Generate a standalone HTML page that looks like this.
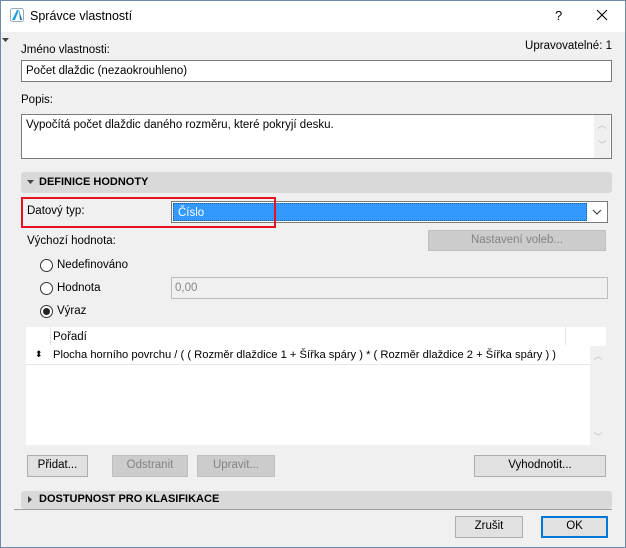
<!DOCTYPE html>
<html><head><meta charset="utf-8"><style>
*{box-sizing:border-box;margin:0;padding:0}
body{width:626px;height:548px;overflow:hidden;font-family:"Liberation Sans",sans-serif;font-size:11.5px;color:#000;background:#f0f0f0}
.win{position:absolute;left:0;top:0;width:626px;height:548px;border:1px solid #6d8aa8;background:#f0f0f0}
.a{position:absolute}
.tb{left:0;top:0;width:624px;height:31px;background:#fff}
.in{background:#fff;border:1px solid #7a7a7a}
.btn{background:#e1e1e1;border:1px solid #adadad;text-align:center;line-height:19px;font-size:11.5px}
.dis{background:#cccccc;border-color:#bfbfbf;color:#838383}
.sec{background:#d9d9d9;border-radius:3px;font-weight:bold;font-size:11px;line-height:20px;padding-left:18px}
.rad{width:13px;height:13px;border:1px solid #333;border-radius:50%;background:#fff}
</style></head><body><div class="win">
<div class="a tb"></div>
<svg class="a" style="left:9px;top:7px" width="14" height="14"><rect x="0.5" y="0.5" width="13" height="13" rx="2" fill="#fff" stroke="#9ab"/><path d="M2 12 L7 2 L9 2 L5 12Z" fill="#1aa0e0"/><path d="M9 2 L12 12 L10 12Z" fill="#0a70b0"/></svg>
<div class="a" style="left:29px;top:8px;font-size:12.5px">Správce vlastností</div>
<div class="a" style="left:554px;top:7px;font-size:13px">?</div>
<svg class="a" style="left:595px;top:8px" width="12" height="12"><path d="M1 1L11 11M11 1L1 11" stroke="#000" stroke-width="1.1"/></svg>
<svg class="a" style="left:1px;top:37px" width="8" height="6"><path d="M0 0H7L3.5 4Z" fill="#444"/></svg>
<div class="a" style="left:20px;top:43px">Jméno vlastnosti:</div>
<div class="a" style="right:13px;top:39px">Upravovatelné: 1</div>
<div class="a in" style="left:20px;top:59px;width:591px;height:22px;padding:4px 4px">Počet dlaždic (nezaokrouhleno)</div>
<div class="a" style="left:20px;top:93px">Popis:</div>
<div class="a in" style="left:20px;top:113px;width:591px;height:45px;padding:4px 4px">Vypočítá počet dlaždic daného rozměru, které pokryjí desku.</div>
<div class="a" style="left:593px;top:114px;width:16px;height:43px;background:#f0f0f0;color:#bbb;font-size:9px;text-align:center;line-height:20px">︿<br>﹀</div>
<div class="a sec" style="left:20px;top:171px;width:591px;height:21px">DEFINICE HODNOTY</div>
<svg class="a" style="left:26px;top:179px" width="8" height="6"><path d="M0 0H7L3.5 4Z" fill="#444"/></svg>
<div class="a" style="left:170px;top:200px;width:437px;height:22px;border:1px solid #7a7a7a;background:#fff"></div>
<div class="a" style="left:172px;top:202px;width:414px;height:18px;background:#3399ff;color:#fff;padding:3px 4px;line-height:13px;border:1px dotted #1a5fa0">Číslo</div>
<div class="a" style="left:20px;top:196px;width:255px;height:31px;border:2px solid #e81123"></div>
<div class="a" style="left:26px;top:204px">Datový typ:</div>
<svg class="a" style="left:591px;top:208px" width="10" height="6"><path d="M1 1L5 5L9 1" stroke="#333" fill="none"/></svg>
<div class="a" style="left:26px;top:234px">Výchozí hodnota:</div>
<div class="a btn dis" style="left:427px;top:229px;width:178px;height:21px">Nastavení voleb...</div>
<div class="a rad" style="left:39px;top:258px"></div><div class="a" style="left:56px;top:258px">Nedefinováno</div>
<div class="a rad" style="left:39px;top:281px"></div><div class="a" style="left:56px;top:281px">Hodnota</div>
<div class="a" style="left:170px;top:276px;width:437px;height:22px;border:1px solid #bcbcbc;background:#f0f0f0;color:#888;padding:4px 3px">0,00</div>
<div class="a rad" style="left:39px;top:304px"></div><div class="a" style="left:42px;top:307px;width:7px;height:7px;border-radius:50%;background:#222"></div><div class="a" style="left:56px;top:304px">Výraz</div>
<div class="a" style="left:25px;top:326px;width:580px;height:118px;background:#fff"></div>
<div class="a" style="left:49px;top:326px;width:1px;height:18px;background:#e3e3e3"></div>
<div class="a" style="left:564px;top:326px;width:1px;height:18px;background:#e3e3e3"></div>
<div class="a" style="left:52px;top:330px">Pořadí</div>
<div class="a" style="left:589px;top:345px;width:16px;height:99px;background:#f0f0f0;color:#bbb;font-size:9px;text-align:center"><div style="margin-top:3px">︿</div><div style="margin-top:68px">﹀</div></div>
<div class="a" style="left:25px;top:363px;width:564px;height:1px;background:#e8e8e8"></div>
<div class="a" style="left:34px;top:348px;font-size:9px">⬍</div>
<div class="a" style="left:52px;top:348px;font-size:11.2px">Plocha horního povrchu / ( ( Rozměr dlaždice 1 + Šířka spáry ) * ( Rozměr dlaždice 2 + Šířka spáry ) )</div>
<div class="a btn" style="left:26px;top:454px;width:61px;height:22px">Přidat...</div>
<div class="a btn dis" style="left:111px;top:454px;width:76px;height:22px">Odstranit</div>
<div class="a btn dis" style="left:196px;top:454px;width:78px;height:22px">Upravit...</div>
<div class="a btn" style="left:473px;top:454px;width:132px;height:22px">Vyhodnotit...</div>
<div class="a sec" style="left:20px;top:490px;width:591px;height:18px;line-height:17px">DOSTUPNOST PRO KLASIFIKACE</div>
<svg class="a" style="left:27px;top:495px" width="6" height="8"><path d="M0 0V7L4 3.5Z" fill="#444"/></svg>
<div class="a" style="left:13px;top:508px;width:598px;height:1px;background:#a0a0a0"></div>
<div class="a btn" style="left:454px;top:515px;width:68px;height:22px">Zrušit</div>
<div class="a btn" style="left:540px;top:515px;width:67px;height:22px;border:2px solid #0078d7;line-height:17px">OK</div>
</div></body></html>
